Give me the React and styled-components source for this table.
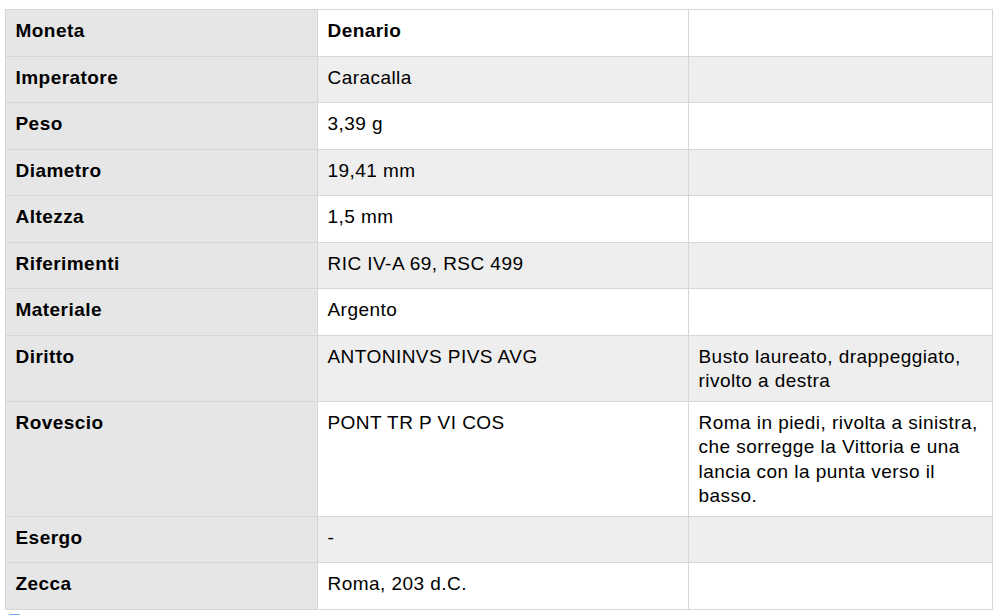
import React from "react";
import styled, { createGlobalStyle } from "styled-components";

const GlobalStyle = createGlobalStyle`
    html, body {
        margin: 0;
        padding: 0;
        background: #ffffff;
        overflow: hidden;
    }
    body {
        font-family: "Liberation Sans", Arial, Helvetica, sans-serif;
        color: #000;
    }
`;

const Page = styled.div`
    padding: 9px 0 0 5px;
    width: 1000px;
    height: 615px;
    box-sizing: border-box;
`;

const CoinTable = styled.table`
    border-collapse: collapse;
    table-layout: fixed;
    width: 988px;
    font-size: 19px;
    line-height: 24.5px;
    letter-spacing: 0.45px;
`;

const Row = styled.tr`
    background: ${({ striped }) => (striped ? "#eeeeee" : "#ffffff")};
`;

const Cell = styled.td`
    border: 1px solid #d6d6d6;
    padding: 9px 10px 7px 9.5px;
    height: 29.5px;
    vertical-align: top;
    font-weight: ${({ bold }) => (bold ? 700 : 400)};
    background: ${({ head }) => (head ? "#e6e6e6" : "transparent")};
`;

const Marker = styled.div`
    margin: 4px 0 0 4px;
    width: 11px;
    height: 2px;
    border-radius: 1px;
    background: #6eaaf0;
`;

const rows = [
    { label: "Moneta", value: "Denario", strong: true },
    { label: "Imperatore", value: "Caracalla" },
    { label: "Peso", value: "3,39 g" },
    { label: "Diametro", value: "19,41 mm" },
    { label: "Altezza", value: "1,5 mm" },
    { label: "Riferimenti", value: "RIC IV-A 69, RSC 499" },
    { label: "Materiale", value: "Argento" },
    {
        label: "Diritto",
        value: "ANTONINVS PIVS AVG",
        note: "Busto laureato, drappeggiato, rivolto a destra",
    },
    {
        label: "Rovescio",
        value: "PONT TR P VI COS",
        note: "Roma in piedi, rivolta a sinistra, che sorregge la Vittoria e una lancia con la punta verso il basso.",
    },
    { label: "Esergo", value: "-" },
    { label: "Zecca", value: "Roma, 203 d.C." },
];

export default function App() {
    return (
        <Page>
            <GlobalStyle />
            <CoinTable>
                <colgroup>
                    <col style={{ width: 312 }} />
                    <col style={{ width: 371 }} />
                    <col />
                </colgroup>
                <tbody>
                    {rows.map((r, i) => (
                        <Row key={r.label} striped={i % 2 === 1}>
                            <Cell head bold>
                                {r.label}
                            </Cell>
                            <Cell bold={r.strong}>{r.value}</Cell>
                            <Cell>{r.note || ""}</Cell>
                        </Row>
                    ))}
                </tbody>
            </CoinTable>
            <Marker />
        </Page>
    );
}
